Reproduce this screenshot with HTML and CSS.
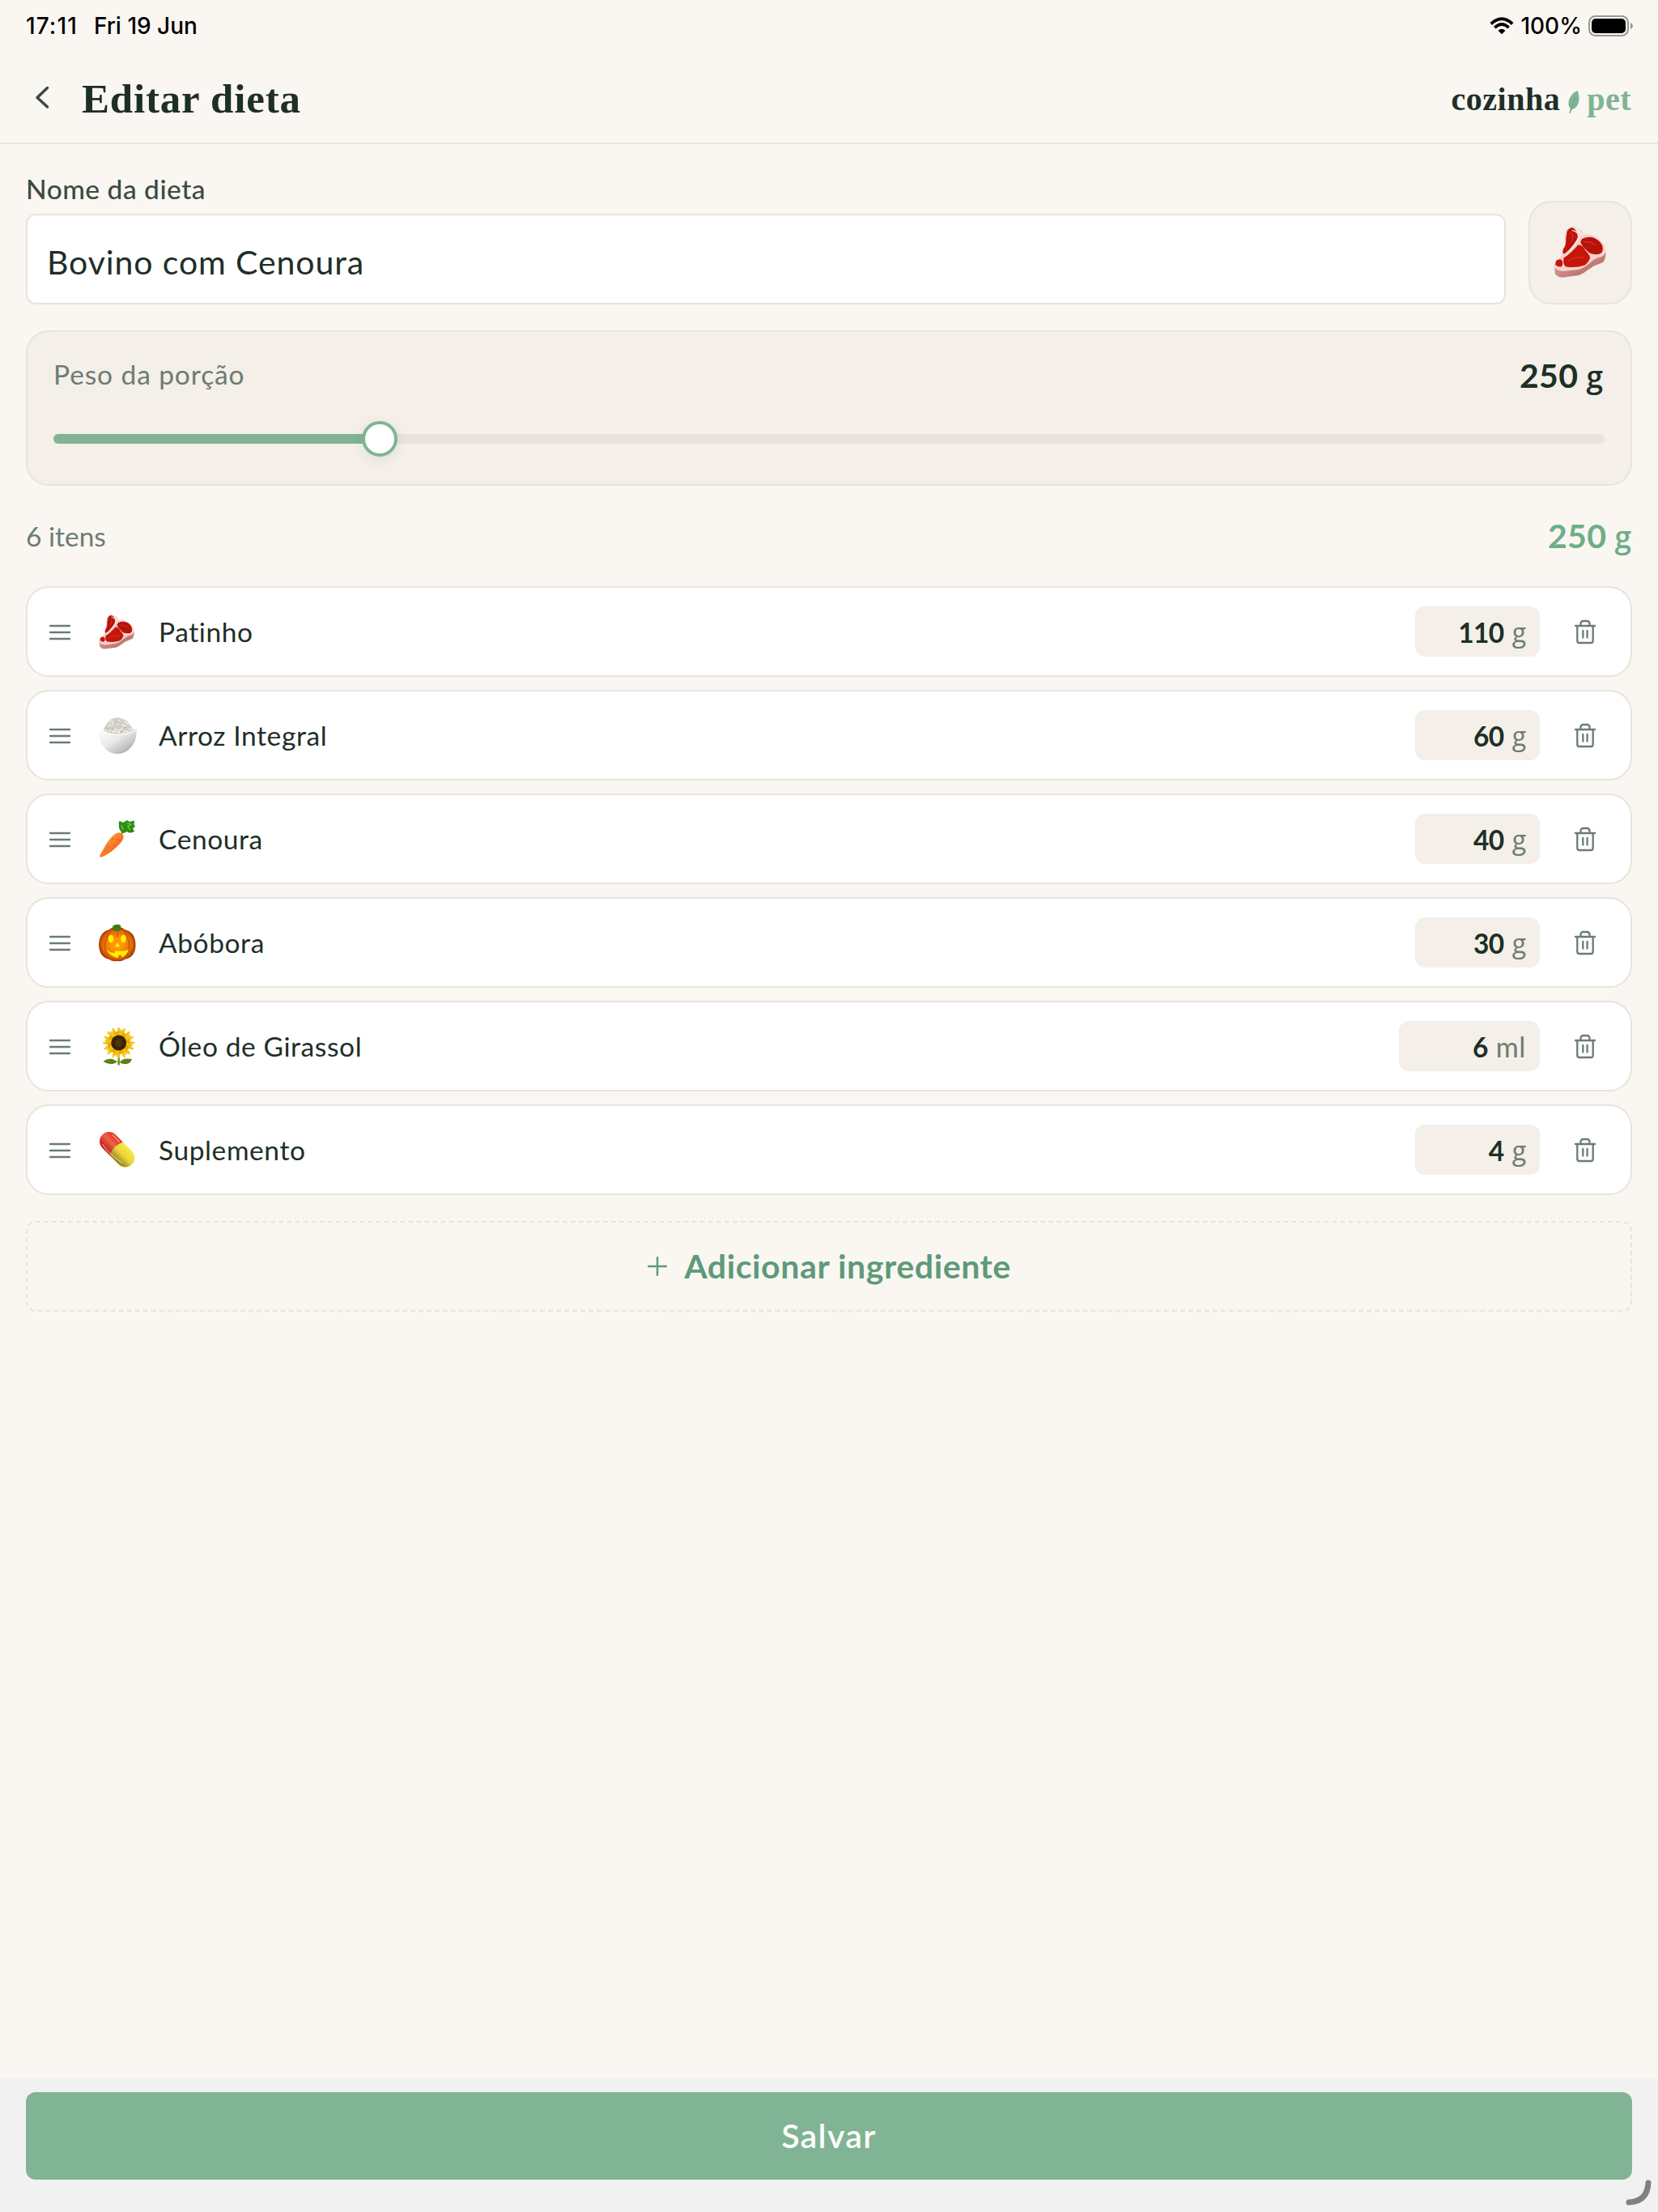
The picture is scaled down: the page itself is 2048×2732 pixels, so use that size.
FILE: index.html
```html
<!DOCTYPE html>
<html lang="pt-BR">
<head>
  <meta charset="UTF-8">
  <meta name="viewport" content="width=device-width, initial-scale=1.0">
  <title>Editar dieta</title>
  <link rel="stylesheet" href="styles.css">
</head>
<body>

<!-- Icons shared by the rows -->
<svg class="sprite" width="0" height="0">
  <defs>
    <linearGradient id="meat-side" x1="0" y1="0" x2="1" y2="1">
      <stop offset="0" stop-color="#eeb0ac"/><stop offset="1" stop-color="#a65b57"/>
    </linearGradient>
    <linearGradient id="bowl-fill" x1="0" y1="0" x2="1" y2="1">
      <stop offset="0" stop-color="#ffffff"/><stop offset=".45" stop-color="#e9e9e9"/><stop offset="1" stop-color="#999999"/>
    </linearGradient>
    <linearGradient id="carrot-fill" x1="0" y1="0" x2="1" y2="1">
      <stop offset=".25" stop-color="#ff9a3c"/><stop offset=".8" stop-color="#ee5a14"/>
    </linearGradient>
    <radialGradient id="pumpkin-fill">
      <stop offset=".3" stop-color="#ff9609"/><stop offset=".8" stop-color="#e66a05"/><stop offset="1" stop-color="#a33c08"/>
    </radialGradient>
    <linearGradient id="pill-red" x1="0" y1="0" x2="0" y2="1">
      <stop offset="0" stop-color="#e22b18"/><stop offset=".45" stop-color="#f0614f"/><stop offset="1" stop-color="#b8190c"/>
    </linearGradient>
    <linearGradient id="pill-yellow" x1="0" y1="0" x2="0" y2="1">
      <stop offset="0" stop-color="#f7ec45"/><stop offset=".5" stop-color="#e9d43a"/><stop offset="1" stop-color="#8f7a12"/>
    </linearGradient>
    <symbol id="menu" viewBox="0 0 32 32">
      <path d="M4 8h24M4 16h24M4 24h24" fill="none" stroke="currentColor" stroke-width="2.3" stroke-linecap="round"/>
    </symbol>
    <symbol id="trash" viewBox="0 0 32 32">
      <path d="M4 9h24M6.3 9v18.5a2.5 2.5 0 0 0 2.500 2.500h14.400a2.500 2.500 0 0 0 2.500-2.500V9M10.500 9V6a3 3 0 0 1 3-3h5a3 3 0 0 1 3 3v3M13.300 15v8.500M18.600 15v8.500" fill="none" stroke="currentColor" stroke-width="2.300" stroke-linecap="round" stroke-linejoin="round"/>
    </symbol>
    <symbol id="steak" viewBox="0 0 196 190">
      <path d="M2 142 6 176Q17 189 32 189L94 181Q112 175 125 163L150 146 184 133Q193 124 195 98L180 90Z" fill="url(#meat-side)"/>
      <path d="M46 16Q55 1 72 1 96 7 108 18V29L132 29 158 38Q191 61 195 87 194 105 178 112 156 116 139 131 116 153 94 159L34 166Q8 164 2 148 2 137 18 124 37 96 43 68 38 35 46 16Z" fill="#f6d1cd"/>
      <path d="M50 18Q57 3 72 4 90 16 90 38 88 49 75 66 55 91 39 101 31 100 36 84 48 66 46 45Z" fill="#bd1308"/>
      <path d="M106 45Q132 34 152 42 181 55 183 79 187 101 161 103 135 105 121 86 105 71 100 57Z" fill="#b81309"/>
      <path d="M92 67Q111 70 119 89 135 106 136 116 130 134 116 143 86 154 47 149 32 141 38 116 63 101 92 67Z" fill="#c4160a"/>
      <path d="M10 126Q22 117 31 125 38 140 29 149 12 150 6 140Z" fill="#c41409"/>
      <path d="M69 13Q101 22 92 48L62 87M84 9Q98 22 108 35" fill="none" stroke="#fff1ef" stroke-width="4"/>
      <path d="M112 58Q137 52 158 70M61 22Q80 30 67 54M55 126Q88 108 113 116" fill="none" stroke="#dc4038" stroke-width="3"/>
    </symbol>
    <symbol id="rice" viewBox="0 0 48 48">
      <path d="M6.500 20Q7 13 11 9 14 3 20 2 25 0 30 3 37 4 39 10 43 13 43.500 20 38 24 25 24 11 24 6.500 20Z" fill="#d3cfc8"/>
      <path d="M9 18l2-2m1-4 3-1m-2 8 3-2m1-6 2-4m1 12 2-4m0-5 3-1m0-5 2 1m-3 11 3 2m1-9 3 2m-4 6 3-2m1 6 2-3m-2-8 3 2m-1-6 4 3m-3 9 4 1m0-4 3 1m-1 5 2-1M14 7l4-2m0 12 1 3m4-1 4 1" stroke="#f6f4ef" stroke-width="1.300" stroke-linecap="round"/>
      <path d="M10 14l2 1m5 0 2 1m3-8 1 2m5-2 1 2m4 3 2 1m-7 4 2 1m7 0 2 1" stroke="#aba69e"/>
      <path d="M1 17.500Q2 15 5 15 10 21.500 24.500 21.500 38 21.500 43.500 15 47 15 47.700 17.500 48 32 38 41 32 46 24 46 15 46 9 40 .5 32 1 17.500Z" fill="url(#bowl-fill)"/>
      <path d="M1.500 17Q11 23 24 22.500 39 22.500 47 17" fill="none" stroke="#fff" stroke-width="1"/>
    </symbol>
    <symbol id="carrot" viewBox="0 0 48 48">
      <path d="M28 18Q32 12 42 5" stroke="#3d8b17" stroke-width="2" fill="none"/>
      <path d="M29 15Q25 10 26 6 25 2 27 1L31 3 36 0 39 2 45 .5 44.500 5 46 8 43 10 45 14Q39 17 36 14L32 16Z" fill="#2e8b18"/>
      <path d="M36 4l5 1-4 3 3 4M29 6l2 6" stroke="#67c92f" stroke-width="1.500" fill="none"/>
      <path d="M21 17Q27 13 31 18 33 22 28 28 18 39 8 44 3 47 2.300 45 2 43 6 37 13 23 21 17Z" fill="url(#carrot-fill)"/>
      <path d="M17 22l3 2m7 1-3-2M11 31l3 2m8-1-3-2M9 37l2 1" stroke="#d95411" stroke-width=".8"/>
    </symbol>
    <symbol id="pumpkin" viewBox="0 0 48 48">
      <path d="M24 5Q29 3 33 7 46 10 46.500 25 47 41 33 44 29 47 24 46 18 47 14 44 1 41 1 25 2 10 14 7 18 3 24 5Z" fill="url(#pumpkin-fill)"/>
      <path d="M17 7Q2 25 14 43M31 7Q45 25 33 43M24 8V17" fill="none" stroke="#c65208" stroke-width="1.200"/>
      <path d="M18 3Q23-1 28 2L28.500 8Q24 10 19 8Z" fill="#3e7c13"/>
      <ellipse cx="16" cy="18.500" rx="3.200" ry="4.700" fill="#fff000"/>
      <ellipse cx="31.400" cy="18.500" rx="3.200" ry="4.700" fill="#fff000"/>
      <path d="M24 23l3.500 5.500h-7ZM10 31Q14 36 21 36V33.500H32Q36 33 38 31 36 39 29 41.500V38.500H25V42Q14 40 10 31Z" fill="#fff000"/>
    </symbol>
    <symbol id="sunflower" viewBox="0 0 48 48">
      <path d="M25.700 34V46.500" stroke="#668516" stroke-width="2.300"/>
      <path d="M25 43Q15 35 6.500 42 15 48 23 43ZM27 43Q30 37 42 39 39 48 28 44Z" fill="#5b8410"/>
      <g fill="#f4c313">
        <path id="petals" d="M25.700 0 28.500 10H22.900ZM25.700 38 28.500 27H22.900ZM6.500 19 17 16.200V21.800ZM45 19 34 16.200V21.800ZM12.200 5.500 21 10.400 17 14.400ZM39.200 5.500 34.400 14.400 30.400 10.400ZM12.200 32.500 17 23.600 21 27.600ZM39.200 32.500 30.400 27.600 34.400 23.600Z" stroke="#f4c313" stroke-width="1.500" stroke-linejoin="round"/>
        <use href="#petals" transform="rotate(22.500 25.700 19)"/>
        <circle cx="25.700" cy="19" r="13.500" fill="#e5a60a"/>
        <use href="#petals" transform="rotate(11 25.700 19) translate(3 2.200) scale(.885)"/>
      </g>
      <circle cx="25.700" cy="19" r="9.500" fill="#3a2205"/>
      <circle cx="25.700" cy="19" r="5" fill="#503207"/>
    </symbol>
    <symbol id="pill" viewBox="0 0 48 48">
      <g transform="rotate(45 23.700 22.800)">
        <path d="M23.700 11.300H9.300a11.500 11.500 0 0 0 0 23H23.700Z" fill="url(#pill-red)"/>
        <path d="M22 11.300H38a11.500 11.500 0 0 1 0 23H22Q17 22.800 22 11.300Z" fill="url(#pill-yellow)"/>
        <path d="M6 31Q20 34 40 30" stroke="#fff" stroke-opacity=".45" stroke-width="1.500" fill="none"/>
        <path d="M7 14H19" stroke="#ff9686" stroke-width="1.500" stroke-linecap="round"/>
      </g>
    </symbol>
  </defs>
</svg>

<div class="status-bar">
  <span class="time">17:11</span>
  <span class="date">Fri 19 Jun</span>
  <svg class="wifi" viewBox="0 0 30 22">
    <g fill="none" stroke="#000" stroke-width="3.800">
      <path d="M1.800 8.500Q15-3.800 28.200 8.500"/>
      <path d="M6.300 13.200Q15 5 23.700 13.200"/>
    </g>
    <path d="M10.500 16.700Q15 12.800 19.500 16.700L15.600 20.700Q15 21.200 14.400 20.700Z"/>
  </svg>
  <span class="charge">100%</span>
  <svg class="battery" viewBox="0 0 56 26">
    <rect x="1" y="1" width="48" height="24" rx="7.500" fill="none" stroke="#989792" stroke-width="2"/>
    <rect x="4" y="4" width="42" height="18" rx="5"/>
    <path d="M52 9Q55 10.500 55 13T52 17Z" fill="#989792"/>
  </svg>
</div>

<header class="header">
  <svg class="back" viewBox="0 0 40 40"><path d="M26.500 8.500 14 20.500 26.500 32" fill="none" stroke="currentColor" stroke-width="3.500" stroke-linecap="round" stroke-linejoin="round"/></svg>
  <h1>Editar dieta</h1>
  <div class="logo">
    <span>cozinha</span>
    <svg class="leaf" viewBox="0 0 14 30">
      <path d="M11.500 1Q15 9 12.500 17 10 23 4.800 24L2.500 29H1L2.800 23Q-1 19 1.200 12 4 4 11.500 1Z" fill="#80b494"/>
      <path d="M9.500 9Q6 17 3 25" stroke="#66a17d" stroke-width=".9" fill="none"/>
    </svg>
    <span class="pet">pet</span>
  </div>
</header>

<main class="content">
  <div class="name-row">
    <div class="name-field">
      <label>Nome da dieta</label>
      <div class="input">Bovino com Cenoura</div>
    </div>
    <div class="emoji-box"><svg><use href="#steak"/></svg></div>
  </div>

  <section class="portion">
    <div class="portion-head">
      <span class="portion-label">Peso da porção</span>
      <span class="total">250 <i>g</i></span>
    </div>
    <div class="slider">
      <div class="slider-fill"></div>
      <div class="slider-thumb"></div>
    </div>
  </section>

  <div class="summary">
    <span class="count">6 itens</span>
    <span class="total green">250 <i>g</i></span>
  </div>

  <div class="list">
    <div class="item">
      <svg class="menu"><use href="#menu"/></svg>
      <svg class="food meat"><use href="#steak"/></svg>
      <span class="name">Patinho</span>
      <span class="qty"><b>110</b><i>g</i></span>
      <svg class="trash"><use href="#trash"/></svg>
    </div>
    <div class="item">
      <svg class="menu"><use href="#menu"/></svg>
      <svg class="food"><use href="#rice"/></svg>
      <span class="name">Arroz Integral</span>
      <span class="qty"><b>60</b><i>g</i></span>
      <svg class="trash"><use href="#trash"/></svg>
    </div>
    <div class="item">
      <svg class="menu"><use href="#menu"/></svg>
      <svg class="food"><use href="#carrot"/></svg>
      <span class="name">Cenoura</span>
      <span class="qty"><b>40</b><i>g</i></span>
      <svg class="trash"><use href="#trash"/></svg>
    </div>
    <div class="item">
      <svg class="menu"><use href="#menu"/></svg>
      <svg class="food"><use href="#pumpkin"/></svg>
      <span class="name">Abóbora</span>
      <span class="qty"><b>30</b><i>g</i></span>
      <svg class="trash"><use href="#trash"/></svg>
    </div>
    <div class="item">
      <svg class="menu"><use href="#menu"/></svg>
      <svg class="food"><use href="#sunflower"/></svg>
      <span class="name">Óleo de Girassol</span>
      <span class="qty ml"><b>6</b><i>ml</i></span>
      <svg class="trash"><use href="#trash"/></svg>
    </div>
    <div class="item">
      <svg class="menu"><use href="#menu"/></svg>
      <svg class="food"><use href="#pill"/></svg>
      <span class="name">Suplemento</span>
      <span class="qty"><b>4</b><i>g</i></span>
      <svg class="trash"><use href="#trash"/></svg>
    </div>
  </div>

  <div class="add">
    <svg viewBox="0 0 24 24"><path d="M12 2v20M2 12h20" stroke="currentColor" stroke-width="2.300" stroke-linecap="round"/></svg>
    <span>Adicionar ingrediente</span>
  </div>
</main>

<footer class="footer">
  <div class="save">Salvar</div>
  <svg class="corner" viewBox="0 0 34 34"><path d="M5 29Q28 28 29 5" fill="none" stroke="#808080" stroke-width="7" stroke-linecap="round"/></svg>
</footer>

</body>
</html>
```
FILE: styles.css
```css
* { box-sizing: border-box; }
body {
  margin: 0;
  height: 2732px;
  display: flex;
  flex-direction: column;
  position: relative;
  background: #faf7f2;
  color: #1e2f27;
  font-family: Lato, "Open Sans", sans-serif;
  font-size: 33.5px;
  line-height: 40px;
  font-variant-ligatures: none;
}
svg { display: block; flex: none; overflow: visible; }
i { font-style: normal; }
.sprite { position: absolute; }

/* status bar */
.status-bar { height: 64px; padding: 0 30px 0 32px; display: flex; align-items: center; font: 500 28px/34px Inter, sans-serif; color: #000; }
.time { letter-spacing: 1.1px; }
.date { margin-left: 20px; }
.wifi { width: 30px; height: 22px; margin-left: auto; }
.charge { margin: 0 8px; }
.battery { width: 56px; height: 26px; }

/* header */
.header { height: 114px; padding: 0 33px 0 32px; display: flex; align-items: center; border-bottom: 2px solid #e8e4dc; font-family: "Liberation Serif", serif; font-weight: 700; }
.back { width: 40px; height: 40px; color: #3d4a42; }
h1 { margin: 3px 0 0 29px; font-size: 51px; line-height: 60px; letter-spacing: .8px; }
.logo { margin-left: auto; padding-top: 5px; display: flex; align-items: center; font-size: 40px; letter-spacing: .5px; }
.leaf { width: 14px; height: 30px; margin: 6px 9px 0 10px; }
.pet { color: #80b494; }

.content { flex: 1; padding: 36px 32px 0; }

/* diet name */
.name-row { display: flex; align-items: flex-end; gap: 28px; }
.name-field { flex: 1; }
label { display: block; height: 50px; font-weight: 500; line-height: 38px; color: #3d4a42; letter-spacing: .5px; }
.input { height: 112px; padding: 14px 24px 0; border: 2px solid #e8e4dc; border-radius: 12px; background: #fff; font-size: 41px; line-height: 88px; letter-spacing: .9px; }
.emoji-box { width: 128px; height: 128px; padding: 0 2px 2px 0; display: flex; align-items: center; justify-content: center; border: 2px solid #e8e4dc; border-radius: 28px; background: #f4efe9; }
.emoji-box svg { width: 65px; height: 63px; }

/* portion weight */
.portion { margin-top: 32px; height: 192px; padding: 32px 32px 0; border: 2px solid #e8e4dc; border-radius: 28px; background: #f4efe9; }
.portion-head, .summary { display: flex; justify-content: space-between; align-items: center; }
.portion-head { height: 40px; }
.portion-label, .count { color: #6b7c72; }
.portion-label { letter-spacing: .9px; }
.total { padding: 3px 2px 0 0; font-size: 41px; font-weight: 700; letter-spacing: .3px; }
.total i { font-family: "Open Sans", sans-serif; font-size: 37px; font-weight: 600; line-height: 1; letter-spacing: 0; }
.green { color: #6dae87; }
.slider { position: relative; height: 12px; margin-top: 54px; border-radius: 6px; background: #e8e3dc; }
.slider-fill { width: 403px; height: 12px; border-radius: 6px; background: #80b494; }
.slider-thumb { position: absolute; left: 381px; top: -16px; width: 44px; height: 44px; border: 4px solid #80b494; border-radius: 50%; background: #fff; box-shadow: 0 4px 16px rgba(30, 47, 39, .08); }
.summary { height: 124px; }
.summary .total { padding: 0 1px 0 0; }

/* ingredients */
.list { display: flex; flex-direction: column; gap: 16px; }
.item { height: 112px; padding: 0 40px 0 24px; display: flex; align-items: center; border: 2px solid #e8e4dc; border-radius: 28px; background: #fff; }
.menu { width: 32px; height: 32px; margin-top: 2px; color: #6b7c72; }
.food { width: 48px; height: 48px; margin: 2px 27px 0 31px; }
.meat { width: 44px; height: 43px; margin: 0 30px 0 32px; }
.name { letter-spacing: .6px; }
.qty { width: 154px; height: 62px; margin-left: auto; padding: 1px 17px 0 0; display: flex; align-items: center; justify-content: flex-end; border-radius: 12px; background: #f4efe9; }
.qty b { font-weight: 700; letter-spacing: -.6px; }
.qty i { margin-left: 10px; color: #6b7c72; font-family: "Open Sans", sans-serif; font-size: 32px; }
.qty.ml { width: 174px; }
.qty.ml i { font-family: Lato, sans-serif; font-size: 34px; letter-spacing: .6px; }
.trash { width: 32px; height: 32px; margin-left: 40px; color: #6b7c72; }

.add { height: 112px; margin-top: 32px; display: flex; align-items: center; justify-content: center; gap: 20px; border: 2px dashed #e8e4dc; border-radius: 12px; color: #5e9a79; font-size: 41px; font-weight: 700; letter-spacing: .6px; }
.add svg { width: 26px; height: 26px; }

/* save bar */
.footer { position: relative; height: 164px; padding: 16px 32px; background: #f1f1f1; }
.save { height: 108px; border-radius: 12px; background: #80b494; color: #fff; font-size: 41px; font-weight: 600; line-height: 108px; letter-spacing: 1.4px; text-align: center; }
.corner { position: absolute; right: 7px; bottom: 7px; width: 34px; height: 34px; }
```
